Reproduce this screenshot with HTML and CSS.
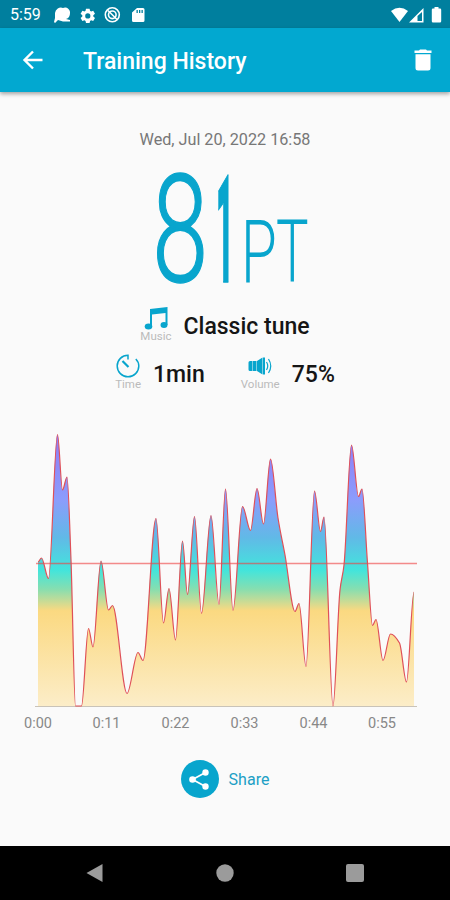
FILE: index.html
```
<!DOCTYPE html>
<html lang="en">
<head>
    <meta charset="UTF-8">
    <meta name="viewport" content="width=device-width, initial-scale=1.0">
    <title>Training History</title>
    <link rel="stylesheet" href="styles.css">
</head>
<body>
    <!-- Status bar -->
    <div class="status-bar">
        <span class="clock">5:59</span>
        <svg class="status-icons" width="100" height="20" viewBox="0 0 100 20" fill="#fff">
            <path d="M4 8a6 6 0 0 1 8-5 5 5 0 0 1 7 5q0 5-4 6l4 1v1.500h-7L7 15l-3 3-1-1 1-4Z"/>
            <path fill-rule="evenodd" transform="translate(3.500 1) scale(.9)" d="M35 3h4l.5 2.400 1.200.7 2.300-.8 2 3.400-1.900 1.600v1.400l1.900 1.600-2 3.400-2.300-.8-1.200.7-.5 2.400h-4l-.5-2.400-1.200-.7-2.300.8-2-3.400 1.900-1.600v-1.400L29 8.700l2-3.400 2.300.8 1.200-.7ZM37 8.100a2.900 2.900 0 1 0 0 5.800 2.900 2.900 0 0 0 0-5.800Z"/>
            <g fill="none" stroke="#fff" stroke-width="1.600"><circle cx="61.300" cy="9.800" r="7"/><circle cx="61.300" cy="9.800" r="3.800"/><path d="M57 5.500l9 9"/></g>
            <path fill-rule="evenodd" d="M86 3h6q1.500 0 1.500 1.500v11q0 1.500-1.500 1.500h-9.500q-1.500 0-1.500-1.500V7.500Zm-.5 2v3h1.300V5Zm2.500 0v3h1.300V5Zm2.500 0v3h1.300V5Z"/>
        </svg>
        <svg class="signal-icons" width="54" height="20" viewBox="0 0 54 20" fill="#fff">
            <path d="M1 6q8.500-6.500 17 0L9.500 17Z"/>
            <path fill-rule="evenodd" d="M19 17.500 33.500 3v14.500ZM27.500 11v5h4.500V7Z"/>
            <path d="M44.500 3.500V2h4v1.500h1.500q1.200 0 1.200 1.200v11.600q0 1.200-1.200 1.200h-7q-1.200 0-1.200-1.200V4.700q0-1.200 1.200-1.200Z"/>
        </svg>
    </div>

    <!-- App bar -->
    <header class="app-bar">
        <svg width="22" height="20" viewBox="0 0 22 20" fill="none" stroke="#fff" stroke-width="2.400"><path d="M21.500 10H3.500M12 1.500 3.500 10l8.500 8.500"/></svg>
        <h1>Training History</h1>
        <svg width="18" height="22" viewBox="0 0 18 22" fill="#fff"><path d="M.5 1.500H5L6 .5h6l1 1h4.500V4H.5ZM1.500 5.200h15V19q0 2.500-2.500 2.500H4Q1.500 21.500 1.500 19Z"/></svg>
    </header>

    <main>
        <p class="date">Wed, Jul 20, 2022 16:58</p>

        <svg class="score" width="160" height="120" viewBox="0 0 160 120">
            <g transform="translate(7.300 112) scale(.67 1)"><text class="points" x="0" y="0">8</text></g>
            <g transform="translate(71 112) scale(.2 1)"><text class="points one" x="0" y="0">1</text></g>
            <g transform="translate(96 112) scale(.66 1)"><text class="unit" x="0" y="0">P</text></g>
            <g transform="translate(131 112) scale(.62 1)"><text class="unit" x="0" y="0">T</text></g>
        </svg>

        <div class="details">
            <div class="item">
                <div class="label">
                    <svg width="24" height="24" viewBox="0 0 24 24" fill="#08a5cd"><path d="M6 3 23.500 1v18h-2V7L8 8.500V21H6Z"/><ellipse cx="4.500" cy="20.500" rx="3.800" ry="3"/><ellipse cx="20" cy="19" rx="3.500" ry="3"/></svg>
                    <span>Music</span>
                </div>
                <b>Classic tune</b>
            </div>
            <div class="row">
                <div class="item">
                    <div class="label">
                        <svg width="24" height="24" viewBox="0 0 24 24" fill="none" stroke="#08a5cd" stroke-width="1.500"><path d="M12 5.500V1.300C6 1.300 1.200 6 1.200 12a10.800 10.800 0 0 0 21.600 0q0-4-3-7"/><path d="m6.500 7 6 6" stroke-width="2.200"/></svg>
                        <span>Time</span>
                    </div>
                    <b>1min</b>
                </div>
                <div class="item">
                    <div class="label">
                        <svg width="24" height="24" viewBox="0 0 24 24"><path fill="#08a5cd" d="M.5 8.500q0-1.500 1.500-1.500h2.500v10H2q-1.500 0-1.500-1.500ZM5 7h3.500v10H5ZM9 7 14.500 3.500v17L9 17ZM15 3.500h2v17H15Z"/><path d="M18.500 8q2.500 4 0 8M20.500 5q4.500 7 0 14" fill="none" stroke="#08a5cd" stroke-width="1.200"/></svg>
                        <span>Volume</span>
                    </div>
                    <b>75%</b>
                </div>
            </div>
        </div>

        <svg class="chart" width="450" height="320" viewBox="0 420 450 320">
            <defs>
                <linearGradient id="level" gradientUnits="userSpaceOnUse" x1="0" y1="434" x2="0" y2="706">
                    <stop offset="0" stop-color="#8f7bf5"/>
                    <stop offset=".24" stop-color="#8c9cfc"/>
                    <stop offset=".38" stop-color="#61b9e7"/>
                    <stop offset=".5" stop-color="#42e5dc"/>
                    <stop offset=".57" stop-color="#86deb0"/>
                    <stop offset=".65" stop-color="#fbd981"/>
                    <stop offset="1" stop-color="#fcedc8"/>
                </linearGradient>
            </defs>
            <path id="area" fill="url(#level)"/>
            <path class="axis" d="M35 706.500H417"/>
            <path class="average" d="M36 563.500H417"/>
            <path id="line" class="line"/>
            <g class="ticks">
                <text x="38" y="728">0:00</text>
                <text x="106.500" y="728">0:11</text>
                <text x="175.500" y="728">0:22</text>
                <text x="244.500" y="728">0:33</text>
                <text x="313.500" y="728">0:44</text>
                <text x="382" y="728">0:55</text>
            </g>
        </svg>

        <div class="share">
            <svg width="38" height="38" viewBox="0 0 38 38"><circle cx="19" cy="19" r="19" fill="#08a5cd"/><path d="M24.500 12.500 11.500 19.500l13 7" fill="none" stroke="#fff" stroke-width="1.700"/><g fill="#fff"><circle cx="24.500" cy="12.500" r="3.200"/><circle cx="11.500" cy="19.500" r="3.300"/><circle cx="24.500" cy="26.500" r="3.200"/></g></svg>
            <span>Share</span>
        </div>
    </main>

    <!-- Navigation -->
    <nav>
        <svg width="18" height="20" viewBox="0 0 18 20"><path d="M16.500 1v18L.5 10Z"/></svg>
        <svg width="18" height="18" viewBox="0 0 18 18"><circle cx="9" cy="9" r="8.700"/></svg>
        <svg width="18" height="18" viewBox="0 0 18 18"><rect width="18" height="18" rx="2"/></svg>
    </nav>

    <script src="chart.js"></script>
</body>
</html>
```
FILE: styles.css
```
* { margin: 0; padding: 0; box-sizing: border-box; }
body { width: 450px; height: 900px; overflow: hidden; display: flex; flex-direction: column; background: #fafafa; font-family: Roboto, sans-serif; }
svg { display: block; flex: none; }
.status-bar { height: 28px; background: #007f9e; color: #fff; display: flex; align-items: center; padding: 1px 6px 0 10px; }
.clock { width: 41px; font-size: 16px; }
.signal-icons { margin-left: auto; }
.app-bar { height: 64px; padding: 0 18px 0 21px; display: flex; align-items: center; background: #02a8d0; color: #fff; box-shadow: 0 2px 4px rgba(0, 0, 0, 0.35); }
h1 { flex: 1; margin-left: 40px; padding-top: 2px; font-size: 23px; font-weight: 500; }
main { flex: 1; display: flex; flex-direction: column; align-items: center; }
.date { margin-top: 38px; height: 20px; line-height: 20px; font-size: 16.2px; color: #777; }
.score { margin-top: 20px; fill: #08a5cd; overflow: visible; }
.points { font-size: 150px; font-weight: 300; stroke: #08a5cd; stroke-width: 1.5; }
.one { font-weight: 900; }
.unit { font-size: 88px; font-weight: 300; }
.details { margin-top: 16px; height: 97px; display: flex; flex-direction: column; align-items: center; }
.row { display: flex; gap: 36px; margin-top: 12px; }
.item { display: flex; align-items: center; gap: 12px; height: 36px; }
.item b { font-size: 23px; font-weight: 500; color: #151515; padding-top: 5px; }
.label { display: flex; flex-direction: column; align-items: center; font-size: 11.5px; line-height: 12px; color: #bbb; }
.chart { margin-top: 17px; }
.axis { stroke: #c9c3b8; }
.average { stroke: #f04040; stroke-width: 1.5; opacity: 0.6; }
.line { fill: none; stroke: #df5058; stroke-width: 1.2; }
.ticks { font-size: 14.5px; fill: #888; text-anchor: middle; }
.share { margin-top: 20px; display: flex; align-items: center; gap: 10px; font-size: 16px; color: #209fc5; }
nav { height: 54px; padding: 0 86px; display: flex; align-items: center; justify-content: space-between; background: #000; fill: #9b9b9b; }
```
FILE: chart.js
```
const points = [
    [38, 562], [41.5, 558], [48.5, 578.5], [57.5, 434.5], [62.5, 490], [67, 477], [71, 560],
    [75.5, 706], [81.5, 706], [88.5, 628.5], [93, 647], [101, 561], [108.5, 610], [112.5, 605.5],
    [127, 693.5], [138, 652.5], [143, 660.5], [156, 518.5], [163.5, 623], [169, 588.5],
    [175.5, 640], [182.5, 541], [187.5, 594.5], [194.5, 516.5], [201.5, 613.5], [211, 515.5],
    [219, 604.5], [225.5, 489], [233, 610.5], [242.5, 506.5], [250.5, 530.5], [257, 488.5],
    [263.5, 524], [270.5, 459], [278, 518], [285, 555], [295, 611.5], [299, 603.5], [306, 666.5],
    [314.5, 491], [320.5, 531.5], [324, 517], [333, 706], [340, 590], [344, 565], [351.5, 445],
    [358.5, 496.5], [362, 489], [367.5, 563], [372.5, 625.5], [376, 619.5], [383, 660.5],
    [390.5, 634], [399.5, 643], [406.5, 682], [414, 592]
];

// Slope of the curve at a point: flat at peaks and dips
function slope(i) {
    if (i === 0 || i === points.length - 1) return 0;
    const [a, b, c] = [points[i - 1], points[i], points[i + 1]];
    const left = (b[1] - a[1]) / (b[0] - a[0]);
    const right = (c[1] - b[1]) / (c[0] - b[0]);
    return left * right <= 0 ? 0 : 2 * left * right / (left + right);
}

let path = `M${points[0]}`;
for (let i = 1; i < points.length; i++) {
    const [x0, y0] = points[i - 1];
    const [x1, y1] = points[i];
    const dx = (x1 - x0) / 3;
    path += `C${x0 + dx},${y0 + slope(i - 1) * dx} ${x1 - dx},${y1 - slope(i) * dx} ${x1},${y1}`;
}

document.getElementById('line').setAttribute('d', path);
document.getElementById('area').setAttribute('d', path + 'V706H38Z');
```
